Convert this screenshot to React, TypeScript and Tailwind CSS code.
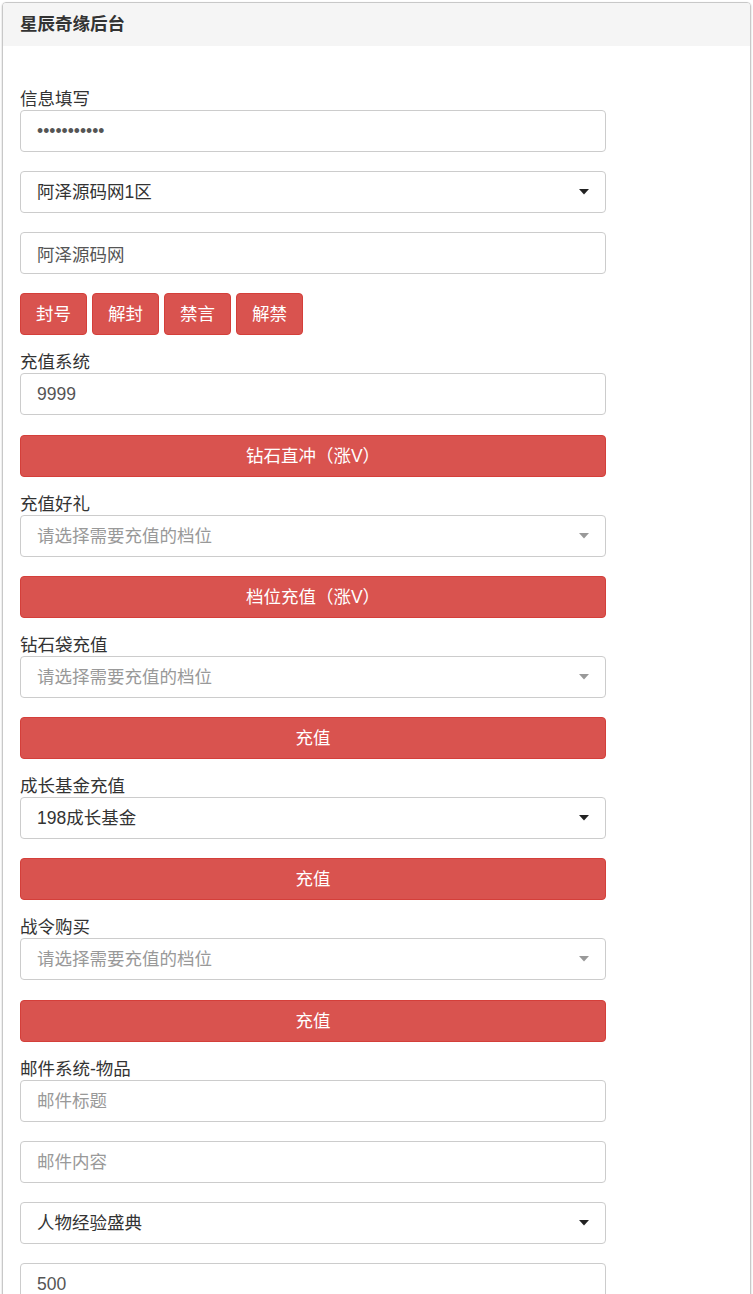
import React from "react";

const font = { fontFamily: '"Liberation Sans", "Noto Sans CJK SC", sans-serif' };

function Label({ children }: { children: React.ReactNode }) {
  return <div className="h-[22px] text-[17.5px] leading-[22px] text-[#333]">{children}</div>;
}

function TextInput({ value, placeholder, type = "text", mb = "mb-[19px]" }: { value?: string; placeholder?: string; type?: string; mb?: string }) {
  return (
    <input
      type={type}
      defaultValue={value}
      placeholder={placeholder}
      readOnly
      className={`block h-[42px] w-[586px] rounded-[4px] border border-[#ccc] bg-white px-[16px] text-[17.5px] text-[#555] outline-none placeholder:text-[#999] ${mb}`}
      style={font}
    />
  );
}

function Select({ value, placeholder = false, mb = "mb-[19px]" }: { value: string; placeholder?: boolean; mb?: string }) {
  return (
    <div className={`flex h-[42px] w-[586px] items-center justify-between rounded-[4px] border border-[#ccc] bg-white pl-[16px] pr-[16px] text-[17.5px] ${placeholder ? "text-[#999]" : "text-[#333]"} ${mb}`}>
      <span>{value}</span>
      <svg width="10" height="6" viewBox="0 0 10 6">
        <path d="M0 0 L10 0 L5 5.5 Z" fill={placeholder ? "#999" : "#222"} />
      </svg>
    </div>
  );
}

function WideButton({ children, mb = "mb-[16px]" }: { children: React.ReactNode; mb?: string }) {
  return (
    <div className={`flex h-[42px] w-[586px] items-center justify-center rounded-[4px] border border-[#d43f3a] bg-[#d9534f] text-[17.5px] text-white ${mb}`}>
      {children}
    </div>
  );
}

function SmallButton({ children }: { children: React.ReactNode }) {
  return (
    <div className="flex h-[42px] w-[67px] items-center justify-center rounded-[4px] border border-[#d43f3a] bg-[#d9534f] text-[17.5px] text-white">
      {children}
    </div>
  );
}

export default function App() {
  return (
    <div className="min-h-[1294px] bg-white p-[2px]" style={font}>
      <div className="overflow-hidden rounded-[4px] border border-[#c8c8c8] shadow-[0_1px_2px_rgba(0,0,0,0.25)]">
        <div className="flex h-[43px] items-center bg-[#f5f5f5] pl-[17px] text-[17.5px] font-bold text-[#333]">
          星辰奇缘后台
        </div>
        <div className="bg-white pl-[17px] pt-[42px] pb-[40px]">
          <Label>信息填写</Label>
          <TextInput type="password" value="12345678901" />
          <Select value="阿泽源码网1区" />
          <TextInput value="阿泽源码网" />
          <div className="mb-[16px] flex gap-[5px]">
            <SmallButton>封号</SmallButton>
            <SmallButton>解封</SmallButton>
            <SmallButton>禁言</SmallButton>
            <SmallButton>解禁</SmallButton>
          </div>

          <Label>充值系统</Label>
          <TextInput value="9999" mb="mb-[20px]" />
          <WideButton>钻石直冲（涨V）</WideButton>

          <Label>充值好礼</Label>
          <Select value="请选择需要充值的档位" placeholder />
          <WideButton>档位充值（涨V）</WideButton>

          <Label>钻石袋充值</Label>
          <Select value="请选择需要充值的档位" placeholder />
          <WideButton>充值</WideButton>

          <Label>成长基金充值</Label>
          <Select value="198成长基金" />
          <WideButton>充值</WideButton>

          <Label>战令购买</Label>
          <Select value="请选择需要充值的档位" placeholder mb="mb-[20px]" />
          <WideButton>充值</WideButton>

          <Label>邮件系统-物品</Label>
          <TextInput placeholder="邮件标题" />
          <TextInput placeholder="邮件内容" />
          <Select value="人物经验盛典" />
          <TextInput value="500" mb="" />
        </div>
      </div>
    </div>
  );
}
